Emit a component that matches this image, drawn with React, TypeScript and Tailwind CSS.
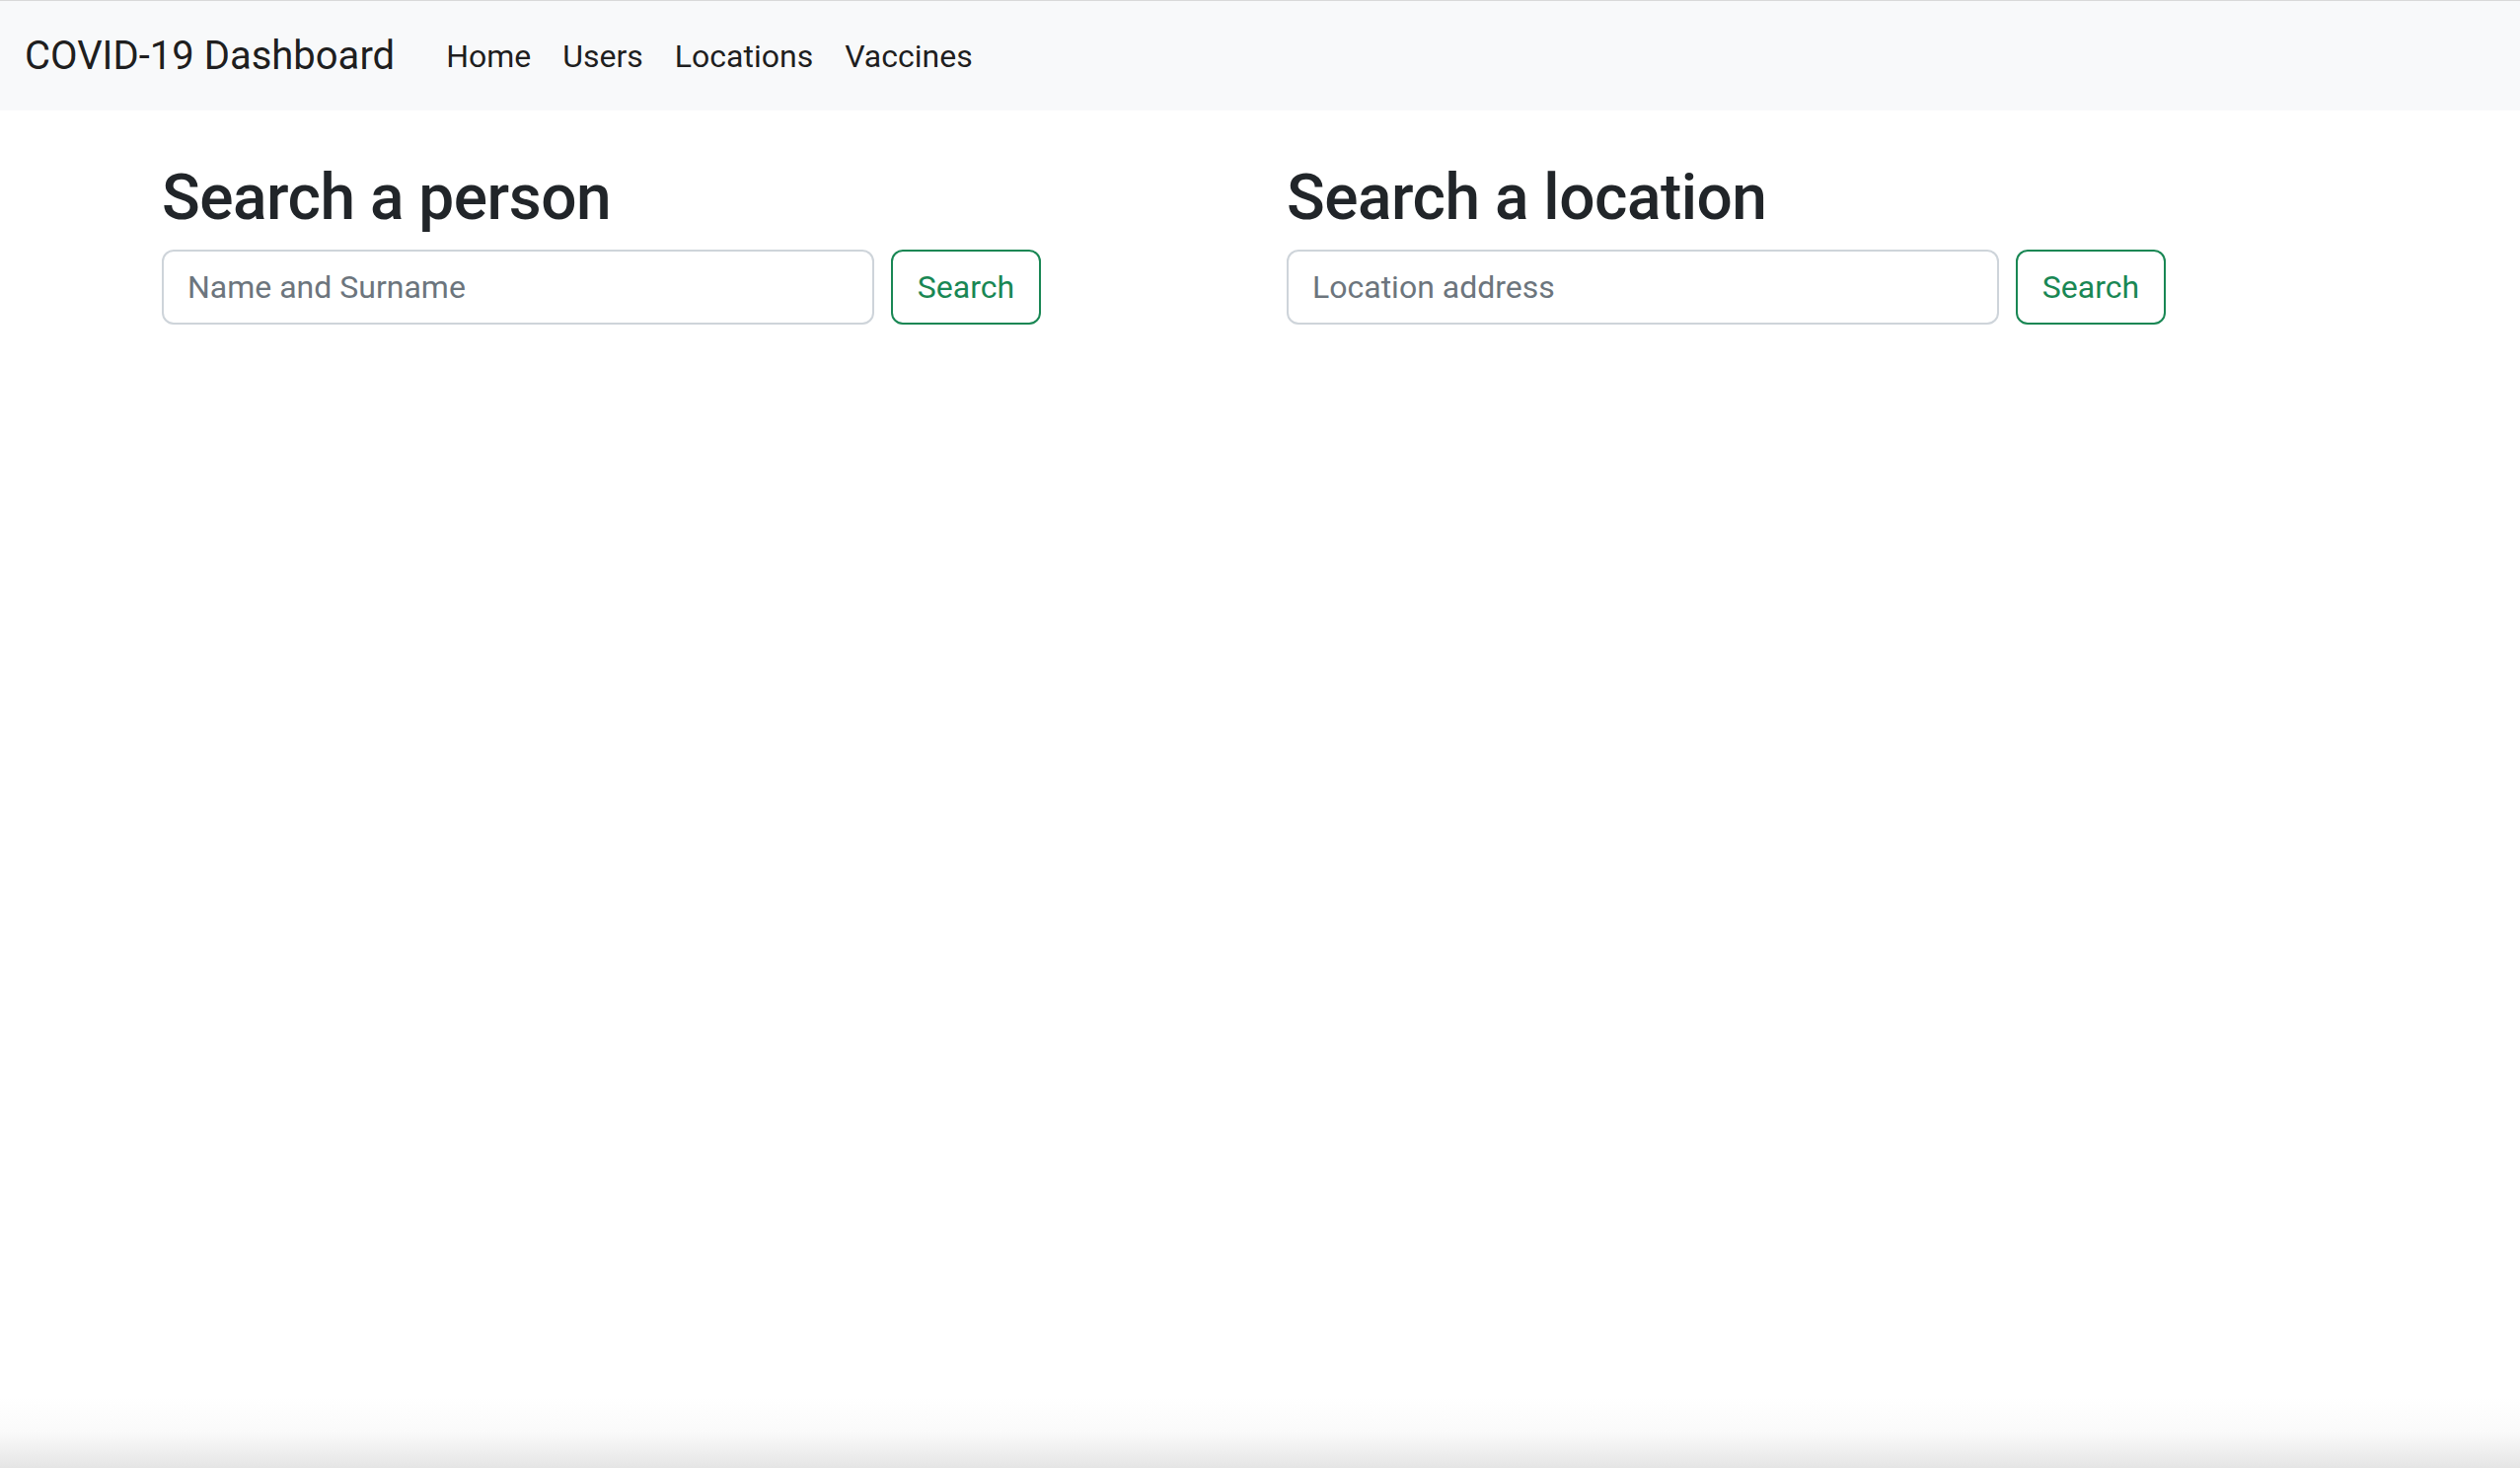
import React from 'react';

const font = { fontFamily: 'Roboto, "Noto Sans", sans-serif' };

const navLinks = ['Home', 'Users', 'Locations', 'Vaccines'];

const SearchBox: React.FC<{ title: string; placeholder: string }> = ({ title, placeholder }) => (
  <div className="px-[24px]">
    <h2 className="text-[64px] leading-[1.2] font-medium tracking-[-0.5px] text-[#212529] mb-[13px]">{title}</h2>
    <form className="flex" onSubmit={(e) => e.preventDefault()}>
      <input
        type="search"
        placeholder={placeholder}
        className="w-[722px] h-[76px] mr-[17px] px-[24px] text-[32px] text-[#212529] placeholder:text-[#6c757d] bg-white border-2 border-[#ced4da] rounded-[12px] outline-none"
      />
      <button
        type="submit"
        className="w-[152px] h-[76px] text-[32px] text-[#198754] border-2 border-[#198754] rounded-[12px] bg-transparent"
      >
        Search
      </button>
    </form>
  </div>
);

const App: React.FC = () => {
  return (
    <div className="min-h-screen flex flex-col bg-white" style={font}>
      <nav className="h-[112px] flex items-center bg-[#f8f9fa] border-t border-[#d9d9d9] pl-[25px] pr-[24px]">
        <a href="#" className="text-[40px] leading-[60px] text-black/90 mr-[36px]">
          COVID-19 Dashboard
        </a>
        <ul className="flex">
          {navLinks.map((l) => (
            <li key={l}>
              <a href="#" className="block px-[16px] py-[16px] text-[32px] leading-[48px] text-black/90">
                {l}
              </a>
            </li>
          ))}
        </ul>
      </nav>

      <main className="flex-1 ml-[140px] mt-[51px]">
        <div className="grid grid-cols-[1140px_1140px]">
          <SearchBox title="Search a person" placeholder="Name and Surname" />
          <SearchBox title="Search a location" placeholder="Location address" />
        </div>
      </main>

      <div className="h-[72px] bg-gradient-to-b from-white via-[#fafafa] to-[#e5e5e5]" />
    </div>
  );
};

export default App;
